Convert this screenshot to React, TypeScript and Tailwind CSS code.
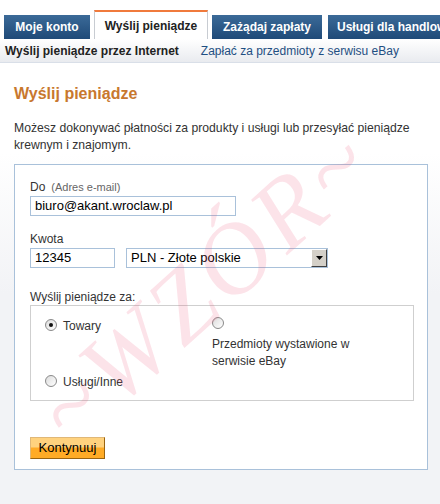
import React from "react";

function Radio({ checked }: { checked?: boolean }) {
  return (
    <span className="relative inline-flex h-[12px] w-[12px] shrink-0 items-center justify-center rounded-full border border-[#8a8a8a] bg-[linear-gradient(135deg,#dcdcdc,#ffffff)]">
      {checked && <span className="h-[4px] w-[4px] rounded-full bg-[#111]" />}
    </span>
  );
}

export default function App() {
  const darkTab =
    "flex h-[24px] items-center text-white font-bold text-[12px] bg-[linear-gradient(#3b6a98,#1f4a78)]";
  return (
    <div className="relative h-[504px] w-[440px] overflow-hidden bg-white font-['Liberation_Sans',Arial,sans-serif] text-[#222]">
      {/* Tabs */}
      <div className="flex h-[39px] items-end gap-[4px] pl-[4px]">
        <div className={darkTab + " w-[86px] justify-center"}>Moje konto</div>
        <div className="flex h-[29px] w-[114px] items-center justify-center border-x border-t-2 border-x-[#c8ccd2] border-t-[#f07a3c] bg-white text-[12px] font-bold text-[#222]">
          Wyślij pieniądze
        </div>
        <div className={darkTab + " w-[110px] justify-center"}>Zażądaj zapłaty</div>
        <div className={darkTab + " ml-[2px] flex-1 pl-[9px] whitespace-nowrap overflow-hidden"}>
          Usługi dla handlowców
        </div>
      </div>
      {/* Sub nav */}
      <div className="flex h-[24px] items-center border-b border-[#d9dfe8] bg-[linear-gradient(#ffffff,#e9ebef)] text-[12px]">
        <span className="pl-[5px] font-bold text-[#222]">Wyślij pieniądze przez Internet</span>
        <span className="pl-[22px] text-[#1f4f82]">Zapłać za przedmioty z serwisu eBay</span>
      </div>
      {/* Main */}
      <div className="h-[441px] bg-[linear-gradient(#ffffff_0px,#ffffff_90px,#f2f3f6_230px,#f2f3f6)] px-[14px] pt-[22px]">
        <h1 className="text-[16px] font-bold leading-[18px] text-[#c8782e]">Wyślij pieniądze</h1>
        <p className="mt-[17px] w-[412px] text-[12.2px] leading-[17px] text-[#333]">
          Możesz dokonywać płatności za produkty i usługi lub przesyłać pieniądze krewnym i znajomym.
        </p>
        <div className="mt-[10px] h-[306px] w-[414px] border border-[#a9c1da] bg-white px-[15px] pt-[15px]">
          <div className="flex items-baseline text-[12px] leading-[14px] text-[#333]">
            <span>Do</span>
            <span className="ml-[6px] text-[11px] text-[#666]">(Adres e-mail)</span>
          </div>
          <div className="mt-[2px] flex h-[20px] w-[206px] items-center border border-[#a9c1da] pl-[4px] text-[13px] text-black">
            biuro@akant.wroclaw.pl
          </div>
          <div className="mt-[16px] text-[12px] leading-[14px] text-[#333]">Kwota</div>
          <div className="mt-[2px] flex gap-[11px]">
            <div className="flex h-[20px] w-[85px] items-center border border-[#a9c1da] pl-[4px] text-[13px] text-black">
              12345
            </div>
            <div className="flex h-[20px] w-[202px] items-center border border-[#a9c1da] pl-[4px] text-[13px] text-black">
              <span className="flex-1">PLN - Złote polskie</span>
              <span className="flex h-[18px] w-[16px] items-center justify-center border border-t-[#fff] border-l-[#fff] border-r-[#404040] border-b-[#404040] bg-[#d4d0c8]">
                <svg width="7" height="4" viewBox="0 0 7 4">
                  <path d="M0 0h7L3.5 4z" fill="#000" />
                </svg>
              </span>
            </div>
          </div>
          <div className="mt-[22px] text-[12px] leading-[14px] text-[#333]">Wyślij pieniądze za:</div>
          <div className="mt-[1px] h-[96px] w-[384px] border border-[#cfcfcf] pl-[14px] pt-[11px] text-[12px] text-[#333]">
            <div className="grid grid-cols-[167px_1fr] items-start">
              <div className="flex items-center gap-[6px] leading-[14px]">
                <Radio checked />
                <span className="mt-[2px]">Towary</span>
              </div>
              <div className="leading-[17px]">
                <Radio />
                <div className="mt-[2px]">Przedmioty wystawione w</div>
                <div>serwisie eBay</div>
              </div>
            </div>
            <div className="mt-[3px] flex items-center gap-[6px] leading-[14px]">
              <Radio />
              <span className="mt-[2px]">Usługi/Inne</span>
            </div>
          </div>
          <button className="mt-[36px] h-[22px] w-[75px] border border-t-[#e0b878] border-l-[#e0b878] border-r-[#9a6410] border-b-[#9a6410] bg-[linear-gradient(#ffd27e_0%,#ffd27e_45%,#ffab26_50%,#ffab26_100%)] text-[13px] leading-[18px] text-black">
            Kontynuuj
          </button>
        </div>
      </div>
      {/* Watermark */}
      <div className="pointer-events-none absolute left-[205px] top-[285px] -translate-x-1/2 -translate-y-1/2 -rotate-[42deg] whitespace-nowrap font-['Liberation_Serif',serif] text-[100px] italic leading-none tracking-[6px] text-[rgba(236,80,120,0.16)]">
        ~WZÓR~
      </div>
    </div>
  );
}
